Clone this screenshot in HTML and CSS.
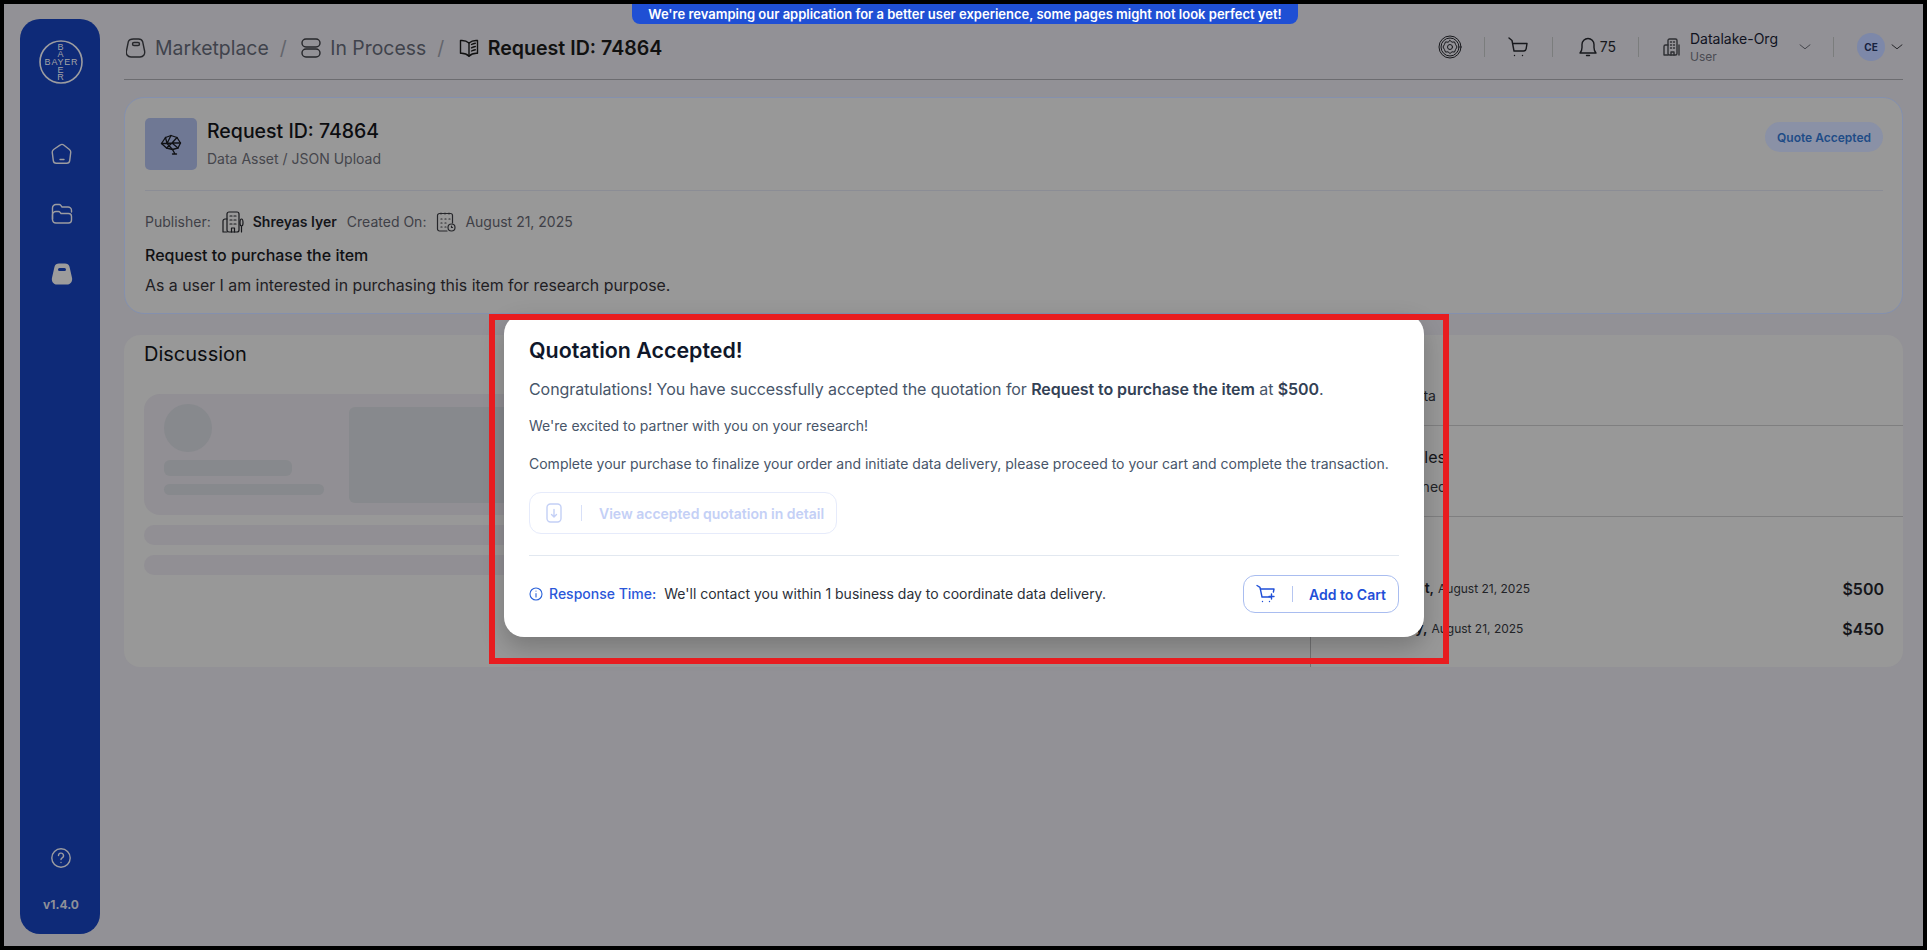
FILE: index.html
```html
<!DOCTYPE html>
<html lang="en">
<head>
<meta charset="utf-8">
<title>Request ID: 74864</title>
<link rel="stylesheet" href="styles.css">
</head>
<body>
<div class="frame">
  <aside class="sidebar">
    <svg class="logo" viewBox="0 0 44 44">
      <circle cx="22" cy="22" r="21" class="logo-ring"/>
      <text x="22.500" y="25.300" class="logo-text">BAYER</text>
      <text x="22" y="10" class="logo-text">B</text>
      <text x="22" y="17" class="logo-text">A</text>
      <text x="22" y="33" class="logo-text">E</text>
      <text x="22" y="40" class="logo-text">R</text>
    </svg>
    <nav class="side-nav">
      <svg class="ic side-ic" viewBox="0 0 22 22"><path d="M9 2.2a3.2 3.2 0 0 1 4 0l5.4 4.3c1 .8 1.5 2 1.3 3.2l-1 8a3 3 0 0 1-3 2.6H5.3a3 3 0 0 1-3-2.6l-1-8c-.2-1.2.3-2.400 1.300-3.200z"/><path d="M9 16.500h4"/></svg>
      <svg class="ic side-ic" viewBox="0 0 22 22"><path d="M1.500 16V5a3.500 3.500 0 0 1 3.500-3.500h3.200a2 2 0 0 1 1.600.8l1.200 1.700h6a3.500 3.500 0 0 1 3.500 3.500v1.500"/><path d="M1.500 17V12a3.500 3.500 0 0 1 3.500-3.500h2.500a2 2 0 0 1 1.600.8l.9 1.200h7.500a3 3 0 0 1 3 3v3.500a3 3 0 0 1-3 3H5a3.500 3.500 0 0 1-3.500-3z"/></svg>
      <svg class="side-ic solid" viewBox="0 0 22 22"><path fill-rule="evenodd" d="M8 .5h6c2.200 0 3.900 1.200 4.500 3.200l2.500 11c.8 3.600-1.400 6.800-5 6.800H6c-3.600 0-5.800-3.200-5-6.800l2.500-11C4.100 1.700 5.800.5 8 .5zM8.500 5a1.500 1.500 0 0 0 0 3h5a1.500 1.500 0 0 0 0-3z"/></svg>
    </nav>
    <div class="side-foot">
      <svg class="ic help" viewBox="0 0 20 20"><circle cx="10" cy="10" r="9.200"/><path d="M7.500 7.600a2.500 2.500 0 1 1 3.700 2.200c-.8.500-1.200 1-1.200 1.700"/><path d="M10 14.500v.1"/></svg>
      <span class="version">v1.4.0</span>
    </div>
  </aside>

  <main class="main">
    <header class="topbar">
      <div class="crumbs">
        <svg class="ic crumb-ic" viewBox="0 0 20 20"><path d="M7.500 1h5c2 0 3.500 1 4.200 2.800l1.900 9.200c.6 3.400-1.300 6-4.600 6H5c-3.300 0-5.200-2.600-4.600-6l1.900-9.200C3 2 5.500 1 7.500 1z"/><rect x="6.500" y="4.500" width="7" height="3" rx="1.500"/></svg>
        <span class="crumb">Marketplace</span>
        <span class="slash">/</span>
        <svg class="ic crumb-ic" viewBox="0 0 20 20"><rect x="1" y="1" width="18" height="8" rx="4"/><rect x="1" y="11" width="18" height="8" rx="4"/></svg>
        <span class="crumb">In Process</span>
        <span class="slash">/</span>
        <svg class="ic crumb-ic dark" viewBox="0 0 20 20"><path d="M10 5C8 3.200 4.500 2.200 1.500 2.500v12.800c3-.2 6.500.8 8.500 3 2-2.200 5.500-3.200 8.500-3V2.500C15.500 2.200 12 3.200 10 5z"/><path d="M10 5v13"/><path d="M12.500 6.500c1.400-.8 2.800-1.200 3.800-1.300M12.500 9.800c1.400-.8 2.800-1.200 3.800-1.300M12.500 13c1.400-.8 2.800-1.200 3.800-1.300"/></svg>
        <span class="crumb current">Request ID: 74864</span>
      </div>
      <div class="top-actions">
        <svg class="ic gear" viewBox="0 0 24 24"><circle cx="12" cy="12" r="11"/><circle cx="12" cy="12" r="9"/><path d="M12 5.500l2 1.700 2.500-.3 1 2.400 1.500 2.700-1.500 2.700-1 2.400-2.500-.3-2 1.700-2-1.700-2.500.3-1-2.400L5 12l1.500-2.700 1-2.400 2.500.3z"/><circle cx="12" cy="12" r="2.500"/></svg>
        <span class="sep sep-a"></span>
        <svg class="ic cart" viewBox="0 0 20 20"><path d="M1 1l3 2.500 2 10.500h9.500c1.500 0 2.500-1 2.700-2.400L19 6.500H4.600"/><path d="M6.500 18.500v.1M14.500 18.500v.1"/></svg>
        <span class="sep sep-b"></span>
        <svg class="ic bell" viewBox="0 0 18 20"><path d="M1 16c1.500-1.500 2-3 2-5.500V7.500a6 6 0 0 1 12 0v3c0 2.500.5 4 2 5.500z"/><path d="M7.500 18.500h3"/></svg>
        <span class="count">75</span>
        <span class="sep sep-c"></span>
        <svg class="ic org" viewBox="0 0 18 18"><rect x="5" y="1" width="9" height="16" rx="1.500"/><path d="M7.500 4h1M10.500 4h1M7.500 7h1M10.500 7h1M7.500 10h1M10.500 10h1M8 17v-3h3v3"/><path d="M5 7H2.500A1.500 1.500 0 0 0 1 8.500V17h4M16 7v10"/></svg>
        <div class="org-text">
          <span class="org-name">Datalake-Org</span>
          <span class="org-role">User</span>
        </div>
        <svg class="ic chev chev-org" viewBox="0 0 12 6"><path d="M1 .8l5 4 5-4"/></svg>
        <span class="sep sep-d"></span>
        <span class="avatar">CE</span>
        <svg class="ic chev chev-user" viewBox="0 0 12 6"><path d="M1 .8l5 4 5-4"/></svg>
      </div>
    </header>

    <section class="card request">
      <div class="req-head">
        <div class="req-icon">
          <svg class="ic net" viewBox="0 0 22 22"><path d="M1.500 10.500l4-6L11 2.500l6 2 3.500 5.500-2.500 5-5.500 1.500-6-1.500z"/><path d="M5.500 4.500l1.500 6-5.500 0M11 2.500L7 10.500l5.500 6M17 4.500l-5 5.500 6 5M7 10.500l5-.5 8.500 0M6.500 15l5.500-5M12.500 16.500l2.500 4.500M12.500 21h4"/></svg>
        </div>
        <div class="req-title">
          <h1>Request ID: 74864</h1>
          <p>Data Asset / JSON Upload</p>
        </div>
        <span class="badge">Quote Accepted</span>
      </div>
      <div class="meta">
        <span>Publisher:</span>
        <svg class="ic meta-ic-org" viewBox="0 0 22 22"><rect x="5" y="1" width="12" height="20" rx="2"/><path d="M8 5h2M12 5h2M8 9h2M12 9h2M8 13h2M12 13h2M9.500 21v-4h3v4"/><path d="M5 8H3a2 2 0 0 0-2 2v11h4M19.500 8c1 0 1.500 2 1.500 4s-.5 3-1.500 3-1.500-1-1.500-3 .5-4 1.500-4zM19.500 15v6"/></svg>
        <strong>Shreyas Iyer</strong>
        <span class="created">Created On:</span>
        <svg class="ic meta-ic-cal" viewBox="0 0 20 20"><path d="M11 19H3.500A2 2 0 0 1 1.500 17V3.500a2 2 0 0 1 2-2h11a2 2 0 0 1 2 2V11"/><path d="M5 1v1M9 1v1M13 1v1M5 7h1M9 7h1M13 7h1M5 11h1M9 11h1M5 15h1M9 15h1"/><circle cx="15.500" cy="15.500" r="3.500"/><path d="M15.500 14v1.500h1"/></svg>
        <span>August 21, 2025</span>
      </div>
      <p class="req-name">Request to purchase the item</p>
      <p class="req-desc">As a user I am interested in purchasing this item for research purpose.</p>
    </section>

    <section class="card discussion">
      <div class="disc-left">
        <h2>Discussion</h2>
        <div class="skel-card">
          <div class="skel-person">
            <span class="skel skel-circle"></span>
            <span class="skel skel-bar"></span>
            <span class="skel skel-bar2"></span>
          </div>
          <span class="skel skel-rect"></span>
        </div>
        <span class="skel-line"></span>
        <span class="skel-line"></span>
      </div>
      <div class="disc-right">
        <div class="panel panel-a"><span class="panel-text">Requested Data</span></div>
        <div class="panel panel-b">
          <span class="panel-title">Additional Files</span>
          <span class="panel-text">Nothing assigned</span>
        </div>
        <div class="panel panel-c">
          <div class="price-row"><span><b>Latest Amount,</b> <small>August 21, 2025</small></span><b class="price">$500</b></div>
          <div class="price-row"><span><b>Requested by,</b> <small>August 21, 2025</small></span><b class="price">$450</b></div>
        </div>
      </div>
    </section>
  </main>

  <div class="banner">We're revamping our application for a better user experience, some pages might not look perfect yet!</div>

  <div class="modal">
    <h3>Quotation Accepted!</h3>
    <p class="lead">Congratulations! You have successfully accepted the quotation for <b>Request to purchase the item</b> at <b>$500</b>.</p>
    <p class="note">We're excited to partner with you on your research!</p>
    <p class="note">Complete your purchase to finalize your order and initiate data delivery, please proceed to your cart and complete the transaction.</p>
    <button class="btn btn-off" type="button">
      <svg class="ic btn-ic-doc" viewBox="0 0 16 20"><rect x="1" y="1" width="14" height="18" rx="3.500"/><path d="M8 6.500v7M5.500 11.500L8 14l2.500-2.500"/></svg>
      <span class="btn-sep"></span>
      <span>View accepted quotation in detail</span>
    </button>
    <div class="modal-foot">
      <svg class="ic info" viewBox="0 0 14 14"><circle cx="7" cy="7" r="6"/><path d="M7 6.500v3.500M7 4v.1"/></svg>
      <span class="resp-label">Response Time:</span>
      <span class="resp-text">We'll contact you within 1 business day to coordinate data delivery.</span>
      <button class="btn btn-cart" type="button">
        <svg class="ic btn-ic-cart" viewBox="0 0 20 20"><path d="M1 1.500l3 1.800 2 9.700h8.500"/><path d="M4.500 5H18l-.6 3M6.500 17.500v.1M13.500 17.500v.1M15.500 10v5M13 12.500h5"/></svg>
        <span class="btn-sep"></span>
        <span>Add to Cart</span>
      </button>
    </div>
  </div>
  <div class="highlight"></div>
</div>
</body>
</html>
```
FILE: styles.css
```css
* { box-sizing: border-box; }
html, body { margin: 0; padding: 0; height: 100%; }
body { font-family: Inter, "Liberation Sans", sans-serif; background: #000; overflow: hidden; }
h1, h2, h3, p { margin: 0; }

.frame {
  position: relative;
  display: flex;
  width: 1927px;
  height: 950px;
  border: 4px solid #000;
  background: #929196;
  color: #16171b;
}

.ic { fill: none; stroke: currentColor; stroke-width: 1.4; stroke-linecap: round; stroke-linejoin: round; flex: none; }

/* sidebar */
.sidebar {
  flex: none;
  width: 80px;
  margin: 15px 0 12px 16px;
  background: #0e2a78;
  border-radius: 20px;
  color: #9c9ca0;
  display: flex;
  flex-direction: column;
  align-items: center;
  padding-top: 21px;
}
.logo { width: 44px; height: 44px; margin-left: 2px; }
.logo-ring { fill: none; stroke: #9c9ca0; stroke-width: 1.6; }
.logo-text { font-family: "Liberation Sans", sans-serif; font-size: 9px; letter-spacing: .8px; fill: #a3a3a6; text-anchor: middle; }
.side-nav { display: flex; flex-direction: column; align-items: center; gap: 38px; margin-top: 59px; margin-left: 4px; }
.side-ic { width: 22px; height: 22px; }
.solid { fill: #9c9c9c; }
.side-foot { margin-top: auto; margin-bottom: 21px; display: flex; flex-direction: column; align-items: center; gap: 29px; margin-left: 2px; }
.help { width: 20px; height: 20px; }
.version { font-size: 12px; font-weight: 700; line-height: 16px; color: #8f9098; }

/* main */
.main { flex: 1; min-width: 0; margin-left: 24px; padding-right: 20px; display: flex; flex-direction: column; }
.topbar { height: 76px; flex: none; border-bottom: 1px solid #6c6c70; display: flex; justify-content: space-between; align-items: center; padding: 14px 0 1px 2px; }
.crumbs { display: flex; align-items: center; font-size: 19.4px; line-height: 24px; color: #40434c; }
.crumb-ic { width: 20px; height: 20px; color: #26272b; margin-right: 9px; }
.crumb-ic.dark { color: #111; }
.slash { margin: 0 14.5px 0 11px; color: #63656c; }
.crumb.current { color: #111; font-size: 19.6px; font-weight: 600; }

.top-actions { display: flex; align-items: center; color: #17181c; margin-top: -2px; }
.gear { width: 24px; height: 24px; stroke-width: 1; }
.sep { width: 1px; height: 20px; background: #7b7d7d; flex: none; }
.sep-a { margin: 0 23px 0 22px; }
.cart { width: 20px; height: 20px; }
.sep-b { margin: 0 26px 0 24px; }
.bell { width: 18px; height: 20px; }
.count { font-size: 14px; margin-left: 3px; color: #17181c; line-height: 20px; }
.sep-c { margin: 0 24px 0 22px; }
.org { width: 18px; height: 18px; color: #2e2f33; }
.org-text { display: flex; flex-direction: column; margin-left: 9px; }
.org-name { font-size: 14px; line-height: 17px; color: #10131f; }
.org-role { font-size: 12px; line-height: 15px; margin-top: 2px; color: #4a4b52; }
.chev { width: 12px; height: 6px; }
.chev-org { margin-left: 21px; color: #45464c; stroke-width: 1; }
.sep-d { margin: 0 23px 0 22px; }
.avatar { width: 28px; height: 28px; border-radius: 50%; background: #7d88a9; color: #16213e; font-size: 10px; font-weight: 700; display: flex; align-items: center; justify-content: center; }
.chev-user { margin-left: 6px; color: #26272b; stroke-width: 1; }

/* cards */
.card { background: #989898; border-radius: 20px; }
.request { margin-top: 17px; height: 217px; border: 1px solid #8490ae; padding: 20px 19px 0 20px; flex: none; }
.req-head { display: flex; align-items: flex-start; height: 72px; border-bottom: 1px solid #8b8d95; box-sizing: content-box; padding-bottom: 0; }
.req-icon { width: 52px; height: 52px; background: #6f7894; border-radius: 5px; display: flex; align-items: center; justify-content: center; color: #101114; }
.net { width: 22px; height: 22px; stroke-width: 1.3; }
.req-title { margin-left: 10px; }
.req-title h1 { font-size: 19.5px; font-weight: 500; line-height: 24px; margin-top: 1px; color: #0c0d10; }
.req-title p { font-size: 14px; line-height: 18px; margin-top: 7px; color: #45464c; }
.badge { margin-left: auto; margin-top: 4px; height: 30px; padding: 0 12px; border-radius: 15px; background: #8a91a6; color: #1e4c87; font-size: 12px; font-weight: 600; display: flex; align-items: center; }

.meta { display: flex; align-items: center; font-size: 14px; line-height: 20px; color: #3f4047; margin-top: 20px; }
.meta-ic-org { width: 22px; height: 22px; margin: 0 9px 0 11px; color: #17181c; stroke-width: 1.2; }
.meta strong { font-weight: 600; color: #14151a; }
.created { margin-left: 10px; }
.meta-ic-cal { width: 20px; height: 20px; margin: 0 9px 0 10px; color: #26272b; stroke-width: 1.2; }
.req-name { font-size: 16px; font-weight: 500; line-height: 24px; margin-top: 10px; color: #101114; }
.req-desc { font-size: 15.87px; line-height: 24px; margin-top: 7px; color: #1f2024; }

.discussion { margin-top: 21px; height: 332px; flex: none; display: grid; grid-template-columns: 1186px 1fr; border-radius: 16px; }
.disc-left { padding: 7px 20px 0; display: flex; flex-direction: column; }
.disc-left h2 { font-size: 20px; font-weight: 400; line-height: 24px; color: #0c0d10; }
.skel-card { height: 121px; margin-top: 28px; background: #918f94; border-radius: 16px; display: flex; padding: 10px 20px; gap: 25px; flex: none; }
.skel { display: block; background: #87898d; }
.skel-person { width: 160px; flex: none; }
.skel-circle { width: 48px; height: 48px; border-radius: 50%; }
.skel-bar { width: 128px; height: 16px; border-radius: 6px; margin-top: 8px; }
.skel-bar2 { width: 160px; height: 11px; border-radius: 6px; margin-top: 8px; }
.skel-rect { flex: 1; height: 96px; margin-top: 3px; border-radius: 6px; }
.skel-line { display: block; height: 20px; background: #918f94; border-radius: 10px; margin-top: 10px; flex: none; }

.disc-right { border-left: 1px solid #737374; display: flex; flex-direction: column; }
.panel { padding: 0 19px 0 20px; border-bottom: 1px solid #7f7f80; display: flex; flex-direction: column; }
.panel-a { height: 91px; justify-content: flex-end; padding-bottom: 19px; }
.panel-b { height: 91px; justify-content: flex-end; padding-bottom: 19px; gap: 9px; }
.panel-c { flex: 1; border-bottom: 0; padding-top: 60px; gap: 17px; }
.panel-text { font-size: 14px; line-height: 20px; color: #222327; }
.panel-title { font-size: 16px; line-height: 22px; color: #15161a; }
.price-row { display: flex; align-items: center; justify-content: space-between; font-size: 14px; line-height: 22px; color: #15161a; }
.price-row b { font-weight: 600; }
.price-row small { font-size: 12px; color: #222327; }
.price-row .price { font-size: 16px; }

/* banner */
.banner {
  position: absolute;
  top: 0;
  left: 628px;
  width: 666px;
  height: 20px;
  background: #1f4fd4;
  border-radius: 0 0 8px 8px;
  color: #fff;
  font-size: 13px;
  font-weight: 600;
  line-height: 20px;
  text-align: center;
  white-space: nowrap;
}

/* modal and the red annotation drawn over it */
.modal {
  position: absolute;
  left: 500px;
  top: 310px;
  width: 920px;
  height: 323px;
  background: #fff;
  border-radius: 20px;
  box-shadow: 0 10px 24px rgba(0, 0, 0, .22);
  padding: 21px 25px 0;
  display: flex;
  flex-direction: column;
  color: #475569;
}
.highlight {
  position: absolute;
  left: 485px;
  top: 310px;
  width: 960px;
  height: 350px;
  border: 6px solid #e81c1f;
}
.modal h3 { font-size: 21.4px; font-weight: 600; line-height: 30px; color: #0f172a; }
.lead { font-size: 16px; letter-spacing: -.07px; line-height: 24px; margin-top: 12px; }
.lead b { font-weight: 600; color: #334155; }
.note { font-size: 14px; line-height: 20px; margin-top: 18px; }
.lead + .note { margin-top: 15px; }

.btn { display: inline-flex; align-items: center; background: #fff; font-family: inherit; font-size: 14px; font-weight: 600; border-radius: 12px; padding: 0; flex: none; }
.btn-sep { width: 1px; height: 16px; flex: none; }
.btn-off { width: 308px; height: 42px; margin-top: 18px; border: 1px solid #e6ebfb; color: #c4d0f6; padding-left: 16px; }
.btn-off .btn-sep { background: #d8e0f8; margin: 0 17px 0 19px; }
.btn-ic-doc { width: 16px; height: 20px; }
.modal-foot { margin-top: 21px; border-top: 1px solid #e2e8f0; padding-top: 19px; display: flex; align-items: center; font-size: 14px; line-height: 20px; }
.info { width: 14px; height: 14px; color: #2b62d9; stroke-width: 1.1; }
.resp-label { margin-left: 6px; color: #2b57d9; font-weight: 500; }
.resp-text { margin-left: 8px; color: #2b2f38; }
.btn-cart { margin-left: auto; width: 156px; height: 38px; border: 1px solid #a9bdf0; color: #1f4fd8; padding-left: 12px; }
.btn-cart .btn-sep { background: #b6c6f1; margin: 0 16px; }
.btn-ic-cart { width: 20px; height: 20px; }
```
